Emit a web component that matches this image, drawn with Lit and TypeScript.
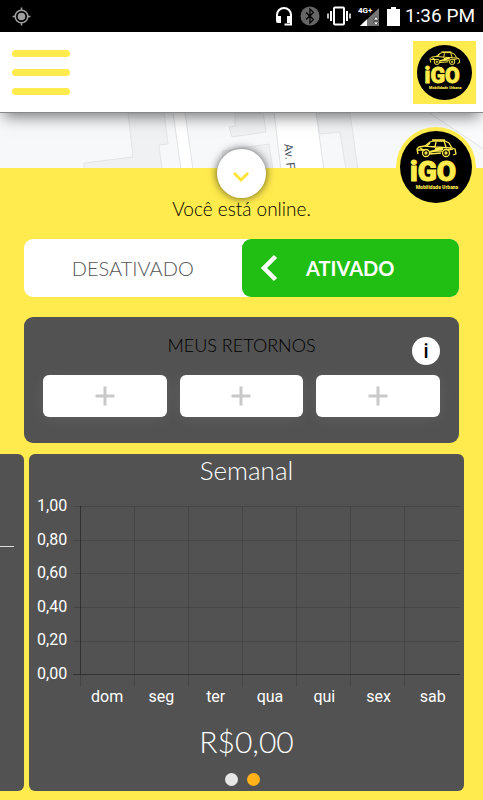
import { LitElement, html, css, svg } from "lit";
import { customElement, property, state } from "lit/decorators.js";
import { classMap } from "lit/directives/class-map.js";

/** Round iGO brand mark with the pickup truck above the wordmark. */
@customElement("igo-logo")
class IgoLogo extends LitElement {
  static styles = css`
    :host { display: block; }
    svg { display: block; width: 100%; height: 100%; }
    .word { font: 900 28px Roboto, sans-serif; fill: #ffeb4d; text-anchor: middle; stroke: #ffeb4d; stroke-width: 1; }
    .sub { font: 900 5px Roboto, sans-serif; fill: #ffeb4d; text-anchor: middle; }
  `;
  render() {
    return html`<svg viewBox="0 0 72 72" role="img" aria-label="iGO Mobilidade Urbana">
      <circle cx="36" cy="36" r="36" fill="#000" />
      <g fill="none" stroke="#ffeb4d" stroke-width="1.3" stroke-linejoin="round">
        <path d="M18 23l-1-5 2-2 6-1 5-4 3-1h12l4 2 3 5 3 1 1 5-3 1" />
        <path d="M25 15l11 1 15 1M36 11l-1 5M44 10l2 6M30 12l-3 3M32 9h13M18 19h7M33 20h9M29 23l12-1M20 17l4 2M48 19l5-1" />
        <path d="M35 18l8 0M30 21l10-3" stroke-width="2" />
        <circle cx="26" cy="22" r="3.500" />
        <circle cx="46" cy="22" r="3.500" />
        <circle cx="26" cy="22" r="1" />
        <circle cx="46" cy="22" r="1" />
      </g>
      <text class="word" x="33" y="50">iGO</text>
      <text class="sub" x="37" y="58">Mobilidade Urbana</text>
    </svg>`;
  }
}

/** Weekly earnings chart with an empty series. */
@customElement("week-chart")
class WeekChart extends LitElement {
  @property({ attribute: false }) days: string[] = [];
  @property({ attribute: false }) ticks: string[] = [];
  static styles = css`
    :host { display: grid; grid-template-columns: 44px 1fr; color: #fff; font: 16px/20px Roboto, sans-serif; padding-right: 4px; }
    .ticks { display: flex; flex-direction: column; justify-content: space-between; height: 188px; padding-left: 8px; }
    svg { display: block; width: 100%; height: 181px; margin-top: 10px; }
    path { fill: none; stroke: #000; stroke-opacity: 0.14; vector-effect: non-scaling-stroke; }
    .axis { stroke-opacity: 0.4; }
    .days { grid-column: 2; display: grid; grid-template-columns: repeat(7, 1fr); margin-left: 7px; text-align: center; }
  `;
  render() {
    return html`
      <div class="ticks">${this.ticks.map((t) => html`<span>${t}</span>`)}</div>
      <svg viewBox="0 0 387 181" preserveAspectRatio="none" aria-hidden="true">
        ${[0, 34, 67, 101, 135].map((y) => svg`<path d="M0 ${y + 0.5}H387" />`)}
        ${[61, 115, 169, 223, 277, 331].map((x) => svg`<path d="M${x + 0.5} 0V181" />`)}
        <path d="M7.5 168V181" />
        <path class="axis" d="M7.5 0V168M0 168.5H387" />
      </svg>
      <div class="days">${this.days.map((d) => html`<span>${d}</span>`)}</div>
    `;
  }
}

@customElement("app-root")
class AppRoot extends LitElement {
  @state() private active = true;

  static styles = css`
    :host { display: flex; flex-direction: column; min-height: 100vh; background: #ffeb4d; color: #000; font-family: Lato, sans-serif; font-weight: 300; overflow: hidden; }
    * { box-sizing: border-box; }
    button { border: 0; padding: 0; font: inherit; color: inherit; cursor: pointer; }
    svg { display: block; }

    .status { display: flex; align-items: center; height: 32px; padding: 0 8px 0 12px; background: #000; color: #fff; font: 19px/32px Roboto, sans-serif; }
    .status .gps { margin-right: auto; }
    .icons { display: flex; align-items: center; gap: 7px; margin-right: 5px; }
    .net { font: 700 8px Roboto, sans-serif; fill: #fff; }

    .header { position: relative; z-index: 1; display: flex; align-items: center; justify-content: space-between; height: 81px; padding: 0 7px 0 12px; background: #fff; border-bottom: 1px solid #888; box-shadow: 0 8px 14px -4px rgba(0, 0, 0, 0.5); }
    .menu { display: flex; flex-direction: column; gap: 12px; width: 58px; background: none; }
    .menu span { height: 7px; border-radius: 4px; background: #ffeb4d; }
    .brand { width: 63px; height: 63px; padding: 4px; background: #ffeb4d; }

    .map { height: 55px; background: #f7f8fa; overflow: hidden; }
    .map svg { width: 100%; height: 56px; }
    .street { font: 400 12px Roboto, sans-serif; fill: #4a5560; }

    .panel { position: relative; display: flex; flex-direction: column; padding-top: 27px; }
    .knob { position: absolute; z-index: 2; top: -19px; left: calc(50% - 25px); display: grid; place-items: center; width: 49px; height: 49px; border-radius: 50%; background: #fff; box-shadow: 0 0 8px rgba(0, 0, 0, 0.65); }
    .knob svg { margin-top: 6px; }
    .float { position: absolute; z-index: 2; top: -41px; right: 7px; width: 80px; height: 80px; padding: 4px; border-radius: 50%; background: #ffeb4d; }
    .online { margin: 0; text-align: center; font-size: 19px; line-height: 28px; }

    .toggle { display: grid; grid-template-columns: 1fr 1fr; height: 58px; margin: 16px 24px 20px; border-radius: 9px; background: #fff; font-size: 20px; color: #555; }
    .toggle button { display: grid; grid-template-columns: 1fr auto 1fr; align-items: center; border-radius: 9px; background: none; }
    .toggle span { grid-column: 2; }
    .toggle svg { grid-row: 1; grid-column: 1; margin-left: 18px; }
    .toggle .on { background: #21bf13; color: #fff; font-weight: 700; }

    .returns { position: relative; margin: 0 24px 11px; padding: 14px 19px 26px; border-radius: 9px; background: #525252; }
    h2 { margin: 0; text-align: center; font-size: 18px; line-height: 28px; font-weight: 300; }
    .info { position: absolute; top: 20px; right: 19px; width: 28px; height: 28px; border-radius: 50%; background: #fff; font: 500 20px/28px Roboto, sans-serif; }
    .slots { display: grid; grid-template-columns: repeat(3, 1fr); gap: 13px; margin-top: 16px; }
    .slots button { display: grid; place-items: center; height: 42px; border-radius: 6px; background: #fff; box-shadow: 0 2px 14px rgba(255, 255, 255, 0.08); }

    .carousel { display: flex; justify-content: flex-end; gap: 5px; padding-right: 19px; overflow: hidden; }
    .slide { flex: none; width: calc(100% - 29px); border-radius: 6px; background: #525252; color: #fff; padding-bottom: 5px; }
    .slide h2 { font-size: 26px; line-height: 32px; margin-bottom: 10px; }
    .rule { margin: 92px 10px 0; border: 0; border-top: 1px solid #ddd; }
    .total { margin: 13px 0 11px; text-align: center; font-size: 30px; line-height: 42px; }
    .dots { display: flex; justify-content: center; gap: 9px; padding-right: 9px; }
    .dots button { width: 13px; height: 13px; border-radius: 50%; background: #e6e6e6; }
    .dots .now { background: #ffb21a; }
  `;

  private set(v: boolean) {
    this.active = v;
  }

  render() {
    const chevron = html`<svg width="18" height="28" viewBox="0 0 18 28" fill="none" stroke="#fff" stroke-width="4.500" aria-hidden="true"><path d="M15.500 2.500L4 14L15.500 25.500" /></svg>`;
    return html`
      <div class="status">
        <svg class="gps" width="19" height="19" viewBox="0 0 19 19" fill="none" stroke="#a0a0a0" stroke-width="1.600"><circle cx="9.500" cy="9.500" r="6.300" /><circle cx="9.500" cy="9.500" r="3.800" fill="#a0a0a0" stroke="none" /><path d="M9.500 .5v3M9.500 15.500v3M.5 9.500h3M15.500 9.500h3" /></svg>
        <div class="icons">
          <svg width="18" height="20" viewBox="0 0 18 20"><path d="M2 15V9a7 7 0 0 1 14 0v9.500H9.500" fill="none" stroke="#fff" stroke-width="2" /><path d="M1 10h5v7H3a2 2 0 0 1-2-2zM12 10h5v7h-5z" fill="#fff" /></svg>
          <svg width="20" height="20" viewBox="0 0 20 20"><circle cx="10" cy="10" r="9.500" fill="#666" /><path d="M6 6.500l7.500 7L10 17V3l3.500 3.500-7.500 7" fill="none" stroke="#000" stroke-width="1.300" /></svg>
          <svg width="24" height="20" viewBox="0 0 24 20" fill="none" stroke="#fff"><rect x="7" y="1.500" width="10" height="17" rx="1" stroke-width="2" /><path d="M4 5v10M20 5v10" stroke-width="2" /><path d="M1 7.500v5M23 7.500v5" stroke-width="1.500" /></svg>
          <svg width="22" height="22" viewBox="0 0 22 22"><path d="M21 3v18H2z" fill="#757575" /><path d="M9 14.300V21H2z" fill="#fff" /><path d="M15.500 15l2.500-3.500 2.500 3.500zM15.500 17l2.500 3.500 2.500-3.500z" fill="#fff" stroke="#000" stroke-width=".5" /><text class="net" x="0" y="8">4G+</text></svg>
          <svg width="13" height="20" viewBox="0 0 13 20"><path d="M4 1h5v2h4v17H0V3h4z" fill="#fff" /></svg>
        </div>
        <time>1:36 PM</time>
      </div>

      <header class="header">
        <button class="menu" aria-label="Menu"><span></span><span></span><span></span></button>
        <igo-logo class="brand"></igo-logo>
      </header>

      <div class="map">
        <svg viewBox="0 0 483 56" preserveAspectRatio="xMidYMin slice" aria-hidden="true">
          <g fill="#eff1f2" stroke="#e2e5e7">
            <path d="M128 0h36l4 31-9 1 3 25H84v-7l49-6z" />
            <path d="M235 0h28l3 19-34 5-3-10 6-1z" />
            <path d="M222 38l47-7 4 26h-48z" />
            <path d="M316 0h34l8 57h-12l-6-38-20 2z" />
          </g>
          <g fill="#fff" stroke="#dfe2e4">
            <path d="M173-1l8 58h12L185-1z" />
            <path d="M274-1l7 58h43L316-1z" />
            <path d="M428-1l60 40V-1z" fill="#fafbfc" />
          </g>
          <text class="street" transform="translate(284 31) rotate(84)">Av. F</text>
        </svg>
      </div>

      <main class="panel">
        <button class="knob" aria-label="Recolher"><svg width="18" height="12" viewBox="0 0 18 12" fill="none" stroke="#ffe53b" stroke-width="3"><path d="M2 2l7 7 7-7" /></svg></button>
        <igo-logo class="float"></igo-logo>
        <p class="online">Você está online.</p>

        <div class="toggle">
          <button class=${classMap({ on: !this.active })} aria-pressed=${!this.active} @click=${() => this.set(false)}>
            ${this.active ? null : chevron}<span>DESATIVADO</span>
          </button>
          <button class=${classMap({ on: this.active })} aria-pressed=${this.active} @click=${() => this.set(true)}>
            ${this.active ? chevron : null}<span>ATIVADO</span>
          </button>
        </div>

        <section class="returns">
          <h2>MEUS RETORNOS</h2>
          <button class="info">i</button>
          <div class="slots">
            ${[1, 2, 3].map(() => html`<button aria-label="Adicionar"><svg width="20" height="20" viewBox="0 0 20 20" stroke="#c9c9c9" stroke-width="3"><path d="M10 .5v19M.5 10h19" /></svg></button>`)}
          </div>
        </section>

        <div class="carousel">
          <section class="slide"><hr class="rule" /></section>
          <section class="slide">
            <h2>Semanal</h2>
            <week-chart
              .ticks=${["1,00", "0,80", "0,60", "0,40", "0,20", "0,00"]}
              .days=${["dom", "seg", "ter", "qua", "qui", "sex", "sab"]}
            ></week-chart>
            <p class="total">R$0,00</p>
            <div class="dots"><button aria-label="Slide 1"></button><button class="now" aria-label="Slide 2"></button></div>
          </section>
        </div>
      </main>
    `;
  }
}
